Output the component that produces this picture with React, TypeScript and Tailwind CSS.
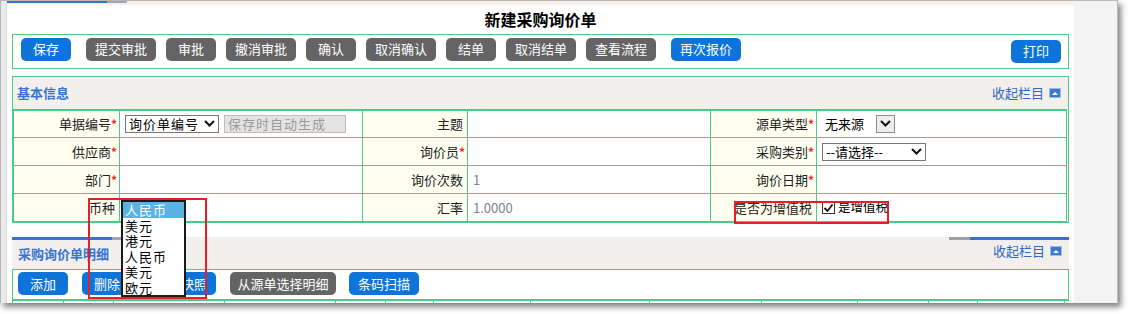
import React from 'react';

const cjk = { fontFamily: '"Noto Sans CJK SC", "Noto Sans", sans-serif' };

function Btn({ label, blue, w, className = '' }: { label: string; blue?: boolean; w: number; className?: string }) {
    return (
        <div
            className={`h-[23px] rounded-[5px] flex items-center justify-center text-[13px] text-white shrink-0 ${blue ? 'bg-[#0e74d9]' : 'bg-[#646464]'} ${className}`}
            style={{ width: w }}
        >
            {label}
        </div>
    );
}

function Collapse() {
    return (
        <div className="flex items-center gap-[5px] text-[13px] text-[#2f68c2]">
            <span>收起栏目</span>
            <span className="w-[12px] h-[10px] bg-[#3a78d2] border border-[#9fb9e0] flex items-end justify-center pb-[2px]">
                <span className="w-0 h-0 border-l-[3px] border-r-[3px] border-b-[3px] border-l-transparent border-r-transparent border-b-white" />
            </span>
        </div>
    );
}

function Label({ text, req }: { text: string; req?: boolean }) {
    return (
        <td className="bg-[#fefff1] border border-[#4ccb86] text-right pr-[2px] text-[13px] text-[#222]">
            {text}
            {req ? <span className="text-[#f0281e] text-[12px] font-bold">*</span> : <span className="inline-block w-[2px]" />}
        </td>
    );
}

function Cell({ children }: { children?: React.ReactNode }) {
    return <td className="bg-white border border-[#4ccb86] pl-[5px] text-[13px]">{children}</td>;
}

function Chevron() {
    return (
        <svg width="11" height="7" viewBox="0 0 11 7" className="shrink-0">
            <path d="M1 1 L5.5 5.5 L10 1" fill="none" stroke="#111" strokeWidth="2" />
        </svg>
    );
}

export default function App() {
    const cols = [12, 63, 113, 224, 335, 385, 433, 530, 649, 761, 857, 928, 977, 1064];
    const currencies = ['人民币', '美元', '港元', '人民币', '美元', '欧元'];
    return (
        <div className="w-[1129px] h-[314px] bg-white relative overflow-hidden" style={cjk}>
            <div className="w-[1118px] h-[303px] border-t border-l border-r border-[#b8b8b8] bg-[#f3f3f3] shadow-[3px_4px_6px_rgba(0,0,0,0.5)] flex">
                <div className="w-[6px] bg-[#ebebeb] border-r border-[#dcdcdc]" />
                <div className="w-[1067px] bg-white flex flex-col">
                    <div className="h-[4px] bg-[#f2efec] flex">
                        <div className="w-[100px] h-[2px] bg-[#3a74c8]" />
                        <div className="w-[20px] h-[2px] bg-[#a0a6b4]" />
                    </div>
                    <div className="h-[30px] flex items-center justify-center text-[16px] font-bold text-black">新建采购询价单</div>

                    {/* toolbar */}
                    <div className="mx-[5px] h-[36px] border border-[#4ccb86] flex items-start pt-[3px] pl-[8px] pr-[7px]">
                        <Btn label="保存" blue w={50} />
                        <Btn label="提交审批" w={70} className="ml-[15px]" />
                        <Btn label="审批" w={50} className="ml-[10px]" />
                        <Btn label="撤消审批" w={70} className="ml-[10px]" />
                        <Btn label="确认" w={50} className="ml-[10px]" />
                        <Btn label="取消确认" w={70} className="ml-[10px]" />
                        <Btn label="结单" w={50} className="ml-[10px]" />
                        <Btn label="取消结单" w={70} className="ml-[10px]" />
                        <Btn label="查看流程" w={70} className="ml-[10px]" />
                        <Btn label="再次报价" blue w={70} className="ml-[15px]" />
                        <Btn label="打印" blue w={50} className="ml-auto mt-[2px]" />
                    </div>

                    {/* basic info */}
                    <div className="mx-[5px] mt-[7px] border border-[#4ccb86]">
                        <div className="h-[32px] bg-[#f2efec] flex items-center justify-between pl-[4px] pr-[7px]">
                            <span className="text-[13px] font-bold text-[#3574d4]">基本信息</span>
                            <Collapse />
                        </div>
                        <table className="table-fixed border-collapse w-[1054px] border-t-2 border-[#4ccb86]">
                            <colgroup>
                                <col className="w-[106px]" />
                                <col className="w-[243px]" />
                                <col className="w-[105px]" />
                                <col className="w-[243px]" />
                                <col className="w-[106px]" />
                                <col />
                            </colgroup>
                            <tbody>
                                <tr className="h-[28px]">
                                    <Label text="单据编号" req />
                                    <Cell>
                                        <div className="flex items-center gap-[5px]">
                                            <div className="w-[94px] h-[18px] border border-[#767676] flex items-center justify-between px-[3px] text-[13px] tracking-[1px]">
                                                询价单编号
                                                <Chevron />
                                            </div>
                                            <div className="w-[122px] h-[18px] border border-[#bdbdbd] bg-[#e4e4e4] text-[#9a9a9a] text-[13px] tracking-[1px] flex items-center pl-[3px]">保存时自动生成</div>
                                        </div>
                                    </Cell>
                                    <Label text="主题" />
                                    <Cell />
                                    <Label text="源单类型" req />
                                    <Cell>
                                        <div className="flex items-center">
                                            <span className="w-[54px] pl-[3px]">无来源</span>
                                            <span className="w-[19px] h-[18px] border border-[#8a8a8a] bg-[#eeeeee] flex items-center justify-center">
                                                <Chevron />
                                            </span>
                                        </div>
                                    </Cell>
                                </tr>
                                <tr className="h-[28px]">
                                    <Label text="供应商" req />
                                    <Cell />
                                    <Label text="询价员" req />
                                    <Cell />
                                    <Label text="采购类别" req />
                                    <Cell>
                                        <div className="w-[104px] h-[18px] border border-[#767676] flex items-center justify-between px-[3px]">
                                            --请选择--
                                            <Chevron />
                                        </div>
                                    </Cell>
                                </tr>
                                <tr className="h-[28px]">
                                    <Label text="部门" req />
                                    <Cell />
                                    <Label text="询价次数" />
                                    <Cell><span className="text-[#7a8190]">1</span></Cell>
                                    <Label text="询价日期" req />
                                    <Cell />
                                </tr>
                                <tr className="h-[28px]">
                                    <Label text="币种" />
                                    <Cell />
                                    <Label text="汇率" />
                                    <Cell><span className="text-[#7a8190]">1.0000</span></Cell>
                                    <Label text="是否为增值税" />
                                    <Cell>
                                        <div className="flex items-center gap-[3px]">
                                            <span className="w-[13px] h-[13px] border border-[#333] bg-white flex items-center justify-center">
                                                <svg width="11" height="10" viewBox="0 0 11 10">
                                                    <path d="M1.5 5 L4.5 8 L9.5 1.5" fill="none" stroke="#111" strokeWidth="1.8" />
                                                </svg>
                                            </span>
                                            <span className="text-[12.5px]">是增值税</span>
                                        </div>
                                    </Cell>
                                </tr>
                            </tbody>
                        </table>
                    </div>

                    {/* detail section */}
                    <div className="mx-[5px] mt-[14px]">
                        <div className="h-[32px] bg-[#f2efec]">
                            <div className="flex h-[3px]">
                                <div className="w-[100px] bg-[#3a74c8]" />
                                <div className="w-[10px] bg-[#a0a6b4]" />
                                <div className="flex-1" />
                                <div className="w-[21px] bg-[#9aa0ae]" />
                                <div className="w-[99px] bg-[#3a74c8]" />
                            </div>
                            <div className="flex items-center justify-between pl-[6px] pr-[7px] h-[29px] -mt-[1px]">
                                <span className="text-[13px] font-bold text-[#3574d4]">采购询价单明细</span>
                                <div className="-mt-[5px]"><Collapse /></div>
                            </div>
                        </div>
                        <div className="h-[30px] border border-b-0 border-[#4ccb86] flex items-start pt-[2px] pl-[5px]">
                            <Btn label="添加" blue w={50} />
                            <Btn label="删除" blue w={50} className="ml-[14px]" />
                            <Btn label="生成快照" blue w={70} className="ml-[14px]" />
                            <Btn label="从源单选择明细" w={106} className="ml-[14px]" />
                            <Btn label="条码扫描" blue w={70} className="ml-[13px]" />
                        </div>
                        <div className="h-[4px] border-t-2 border-[#4ccb86] relative">
                            {cols.map((x) => (
                                <div key={x} className="absolute top-0 h-[4px] w-px bg-[#4ccb86]" style={{ left: x - 12 }} />
                            ))}
                        </div>
                    </div>
                </div>
                <div className="flex-1 bg-[#f3f3f3]" />
            </div>

            {/* open currency listbox */}
            <div className="absolute left-[121px] top-[200px] w-[65px] h-[97px] border-2 border-[#1a1a1a] bg-white text-[13px] flex flex-col">
                {currencies.map((c, i) => (
                    <div
                        key={i}
                        className={`h-[15.5px] leading-[15.5px] pl-[2px] tracking-[1px] ${i === 0 ? 'bg-[#5ab3e2] text-white' : 'text-black'}`}
                    >
                        {c}
                    </div>
                ))}
            </div>

            {/* annotation boxes */}
            <div className="absolute left-[88px] top-[198px] w-[119px] h-[101px] border-2 border-[#e61e28]" />
            <div className="absolute left-[734px] top-[201px] w-[155px] h-[23px] border-2 border-[#e61e28]" />
        </div>
    );
}
